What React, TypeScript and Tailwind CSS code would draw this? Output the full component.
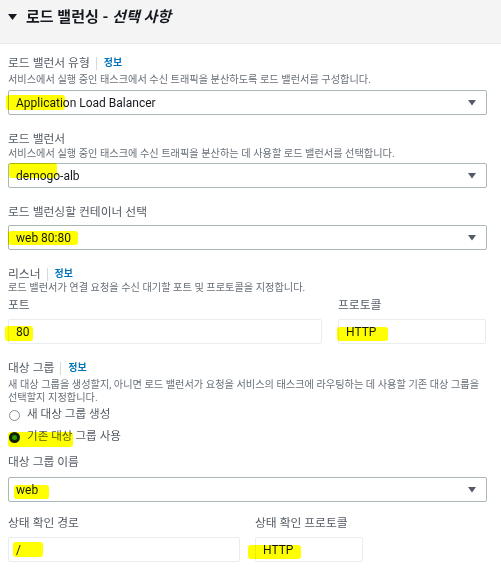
import React from "react";

const F = "font-['Roboto','Noto_Sans_CJK_KR',sans-serif]";

function Label({ text, info, className = "" }: { text: string; info?: boolean; className?: string }) {
  return (
    <div className={`flex items-center h-[16px] text-[11.8px] leading-[16px] text-[#545b64] whitespace-nowrap ${className}`}>
      <span>{text}</span>
      {info && (
        <>
          <span className="ml-[6px] w-px h-[13px] bg-[#d5dbdb]" />
          <span className="ml-[7px] text-[10px] font-bold text-[#0073bb]">정보</span>
        </>
      )}
    </div>
  );
}

function Desc({ children, className = "" }: { children: React.ReactNode; className?: string }) {
  return <div className={`text-[10.2px] leading-[14px] text-[#687078] whitespace-nowrap ${className}`}>{children}</div>;
}

function Select({ value, className = "" }: { value: string; className?: string }) {
  return (
    <div className={`h-[25px] border border-[#aab7b8] rounded-[2px] flex items-center pl-[7px] pr-[10px] text-[12px] text-[#16191f] bg-white ${className}`}>
      <span className="flex-1">{value}</span>
      <svg width="8" height="6" viewBox="0 0 8 6">
        <polygon points="0,0 8,0 4,5.5" fill="#545b64" />
      </svg>
    </div>
  );
}

function Input({ value, className = "" }: { value: string; className?: string }) {
  return (
    <div className={`h-[25px] border border-[#eaeded] rounded-[2px] flex items-center pl-[7px] text-[12px] text-[#16191f] bg-white ${className}`}>
      {value}
    </div>
  );
}

function HL({ l, t, w, h }: { l: number; t: number; w: number; h: number }) {
  return (
    <div
      className="absolute bg-[#ffff00] mix-blend-multiply rounded-[3px]"
      style={{ left: l, top: t, width: w, height: h }}
    />
  );
}

export default function App() {
  return (
    <div className={`relative w-[501px] h-[579px] overflow-hidden bg-white ${F}`}>
      <div className="h-[44px] bg-[#f4f4f4] border-b border-[#eaeded] flex items-start pt-[8px] pl-[8px]">
        <svg width="9" height="7" viewBox="0 0 9 7" className="mt-[6px]">
          <polygon points="0,0 9,0 4.5,6" fill="#16191f" />
        </svg>
        <div className="ml-[9px] text-[15px] leading-[18px] font-bold text-[#16191f] whitespace-nowrap">
          로드 밸런싱 - <span className="italic">선택 사항</span>
        </div>
      </div>

      <div className="pl-[8px] pr-[14px] flex flex-col">
        <Label text="로드 밸런서 유형" info className="mt-[11px]" />
        <Desc className="mt-[2px]">서비스에서 실행 중인 태스크에서 수신 트래픽을 분산하도록 로드 밸런서를 구성합니다.</Desc>
        <Select value="Application Load Balancer" className="mt-[3px]" />

        <Label text="로드 밸런서" className="mt-[16px]" />
        <Desc>서비스에서 실행 중인 태스크에 수신 트래픽을 분산하는 데 사용할 로드 밸런서를 선택합니다.</Desc>
        <Select value="demogo-alb" className="mt-[2px]" />

        <Label text="로드 밸런싱할 컨테이너 선택" className="mt-[16px]" />
        <Select value="web 80:80" className="mt-[5px]" />

        <Label text="리스너" info className="mt-[16px]" />
        <Desc className="-mt-px">로드 밸런서가 연결 요청을 수신 대기할 포트 및 프로토콜을 지정합니다.</Desc>
        <div className="flex mt-[2px]">
          <Label text="포트" className="w-[314px]" />
          <Label text="프로토콜" className="ml-[16px]" />
        </div>
        <div className="flex mt-[6px]">
          <Input value="80" className="w-[314px]" />
          <Input value="HTTP" className="ml-[16px] w-[148px]" />
        </div>

        <Label text="대상 그룹" info className="mt-[16px]" />
        <div className="mt-[2px] text-[10.2px] leading-[13px] text-[#687078] whitespace-nowrap">
          새 대상 그룹을 생성할지, 아니면 로드 밸런서가 요청을 서비스의 태스크에 라우팅하는 데 사용할 기존 대상 그룹을
          <br />
          선택할지 지정합니다.
        </div>
        <div className="h-[22px] flex items-center">
          <span className="ml-[1px] w-[11px] h-[11px] rounded-full border border-[#879196] bg-white" />
          <span className="ml-[7px] text-[11.6px] text-[#545b64]">새 대상 그룹 생성</span>
        </div>
        <div className="h-[22px] flex items-center">
          <span className="ml-[1px] w-[11px] h-[11px] rounded-full bg-[#102030] flex items-center justify-center">
            <span className="w-[5px] h-[5px] rounded-full bg-[#2b9a2b]" />
          </span>
          <span className="ml-[7px] text-[11.6px] text-[#545b64]">기존 대상 그룹 사용</span>
        </div>

        <Label text="대상 그룹 이름" className="mt-[6px]" />
        <Select value="web" className="mt-[7px]" />

        <div className="flex mt-[13px]">
          <Label text="상태 확인 경로" className="w-[232px]" />
          <Label text="상태 확인 프로토콜" className="ml-[15px]" />
        </div>
        <div className="flex mt-[6px]">
          <Input value="/" className="w-[232px]" />
          <Input value="HTTP" className="ml-[15px] w-[108px]" />
        </div>
      </div>

      <HL l={6} t={95} w={59} h={15} />
      <HL l={9} t={163} w={48} h={15} />
      <HL l={8} t={231} w={70} h={14} />
      <HL l={5} t={326} w={28} h={15} />
      <HL l={337} t={327} w={51} h={14} />
      <HL l={8} t={432} w={65} h={15} />
      <HL l={14} t={485} w={35} h={14} />
      <HL l={13} t={542} w={30} h={15} />
      <HL l={248} t={545} w={53} h={14} />
    </div>
  );
}
